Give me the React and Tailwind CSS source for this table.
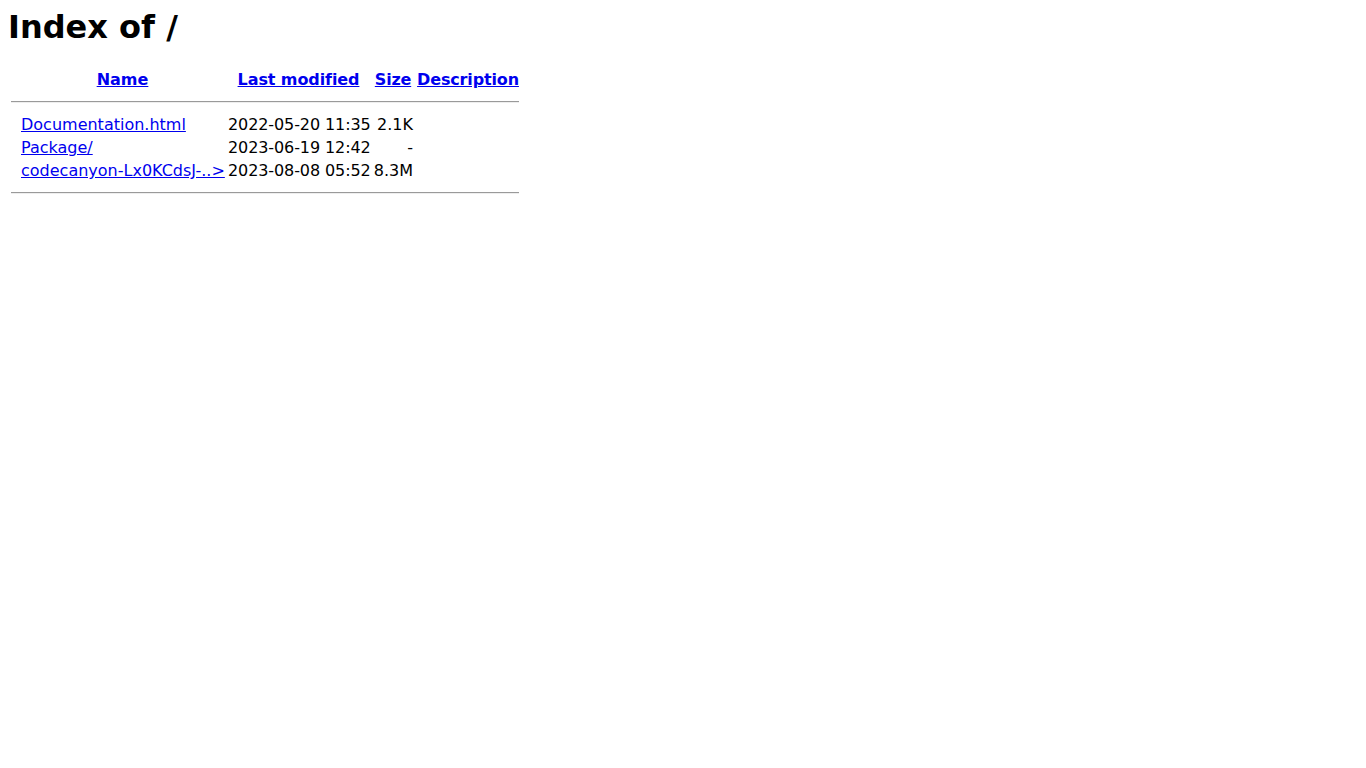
export default function App() {
  const rows = [
    { name: "Documentation.html", date: "2022-05-20 11:35", size: "2.1K" },
    { name: "Package/", date: "2023-06-19 12:42", size: "-" },
    { name: "codecanyon-Lx0KCdsJ-..>", date: "2023-08-08 05:52", size: "8.3M" },
  ];
  const link = "text-[#0000ee] underline";
  return (
    <div className="min-h-screen bg-white p-2 text-black font-['DejaVu_Sans',sans-serif] text-base leading-normal">
      <h1 className="text-[32px] font-bold leading-[normal] mb-[21.44px]">Index of /</h1>
      <table className="table-fixed w-[514px] border-separate border-spacing-[2px] leading-[normal]">
        <colgroup>
          <col className="w-[8px]" />
          <col className="w-[205px]" />
          <col className="w-[143px]" />
          <col className="w-[42px]" />
          <col className="w-[104px]" />
        </colgroup>
        <tbody>
          <tr>
            <th className="p-[1px] align-top">&nbsp;</th>
            <th className="p-[1px] font-bold text-center whitespace-nowrap"><a href="#" className={link}>Name</a></th>
            <th className="p-[1px] font-bold text-center whitespace-nowrap tracking-[-0.1px]"><a href="#" className={link}>Last modified</a></th>
            <th className="p-[1px] font-bold text-center whitespace-nowrap tracking-[-0.2px]"><a href="#" className={link}>Size</a></th>
            <th className="p-[1px] font-bold text-center whitespace-nowrap tracking-[-0.15px]"><a href="#" className={link}>Description</a></th>
          </tr>
          <tr>
            <th colSpan={5} className="p-[1px]">
              <hr className="my-2 h-0 border-t border-b border-t-[#9a9a9a] border-b-[#eeeeee]" />
            </th>
          </tr>
          {rows.map((r) => (
            <tr key={r.name}>
              <td className="p-[1px] align-top">&nbsp;</td>
              <td className="p-[1px] whitespace-nowrap"><a href="#" className={link}>{r.name}</a></td>
              <td className="p-[1px] text-right whitespace-nowrap tracking-[-0.1px]">{r.date}</td>
              <td className="p-[1px] text-right whitespace-nowrap">{r.size}</td>
              <td className="p-[1px]">&nbsp;</td>
            </tr>
          ))}
          <tr>
            <th colSpan={5} className="p-[1px]">
              <hr className="my-2 h-0 border-t border-b border-t-[#9a9a9a] border-b-[#eeeeee]" />
            </th>
          </tr>
        </tbody>
      </table>
    </div>
  );
}
